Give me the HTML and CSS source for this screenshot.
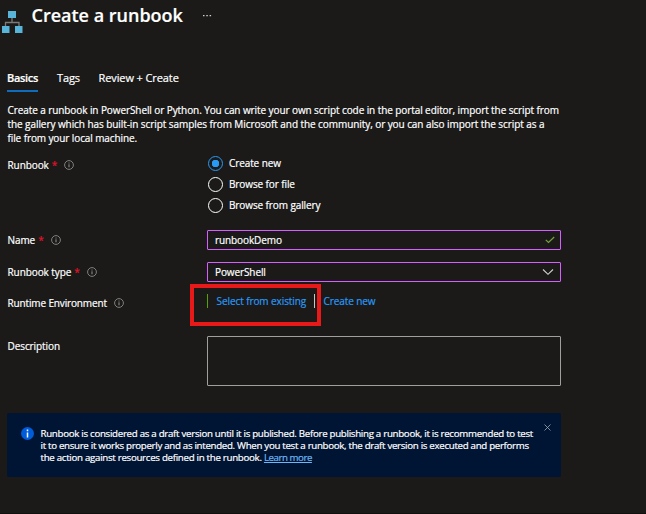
FILE: index.html
```html
<!DOCTYPE html>
<html lang="en">
<head>
<meta charset="utf-8">
<title>Create a runbook</title>
<link rel="stylesheet" href="styles.css">
</head>
<body>
<svg class="defs" width="0" height="0">
  <symbol id="info" viewBox="0 0 10 10"><circle cx="5" cy="5" r="4.4" fill="none" stroke="#8c8b8a" stroke-width=".9"/><path d="M5 4.3V7.3M5 2.6V3.5" stroke="#a5a4a3" stroke-width=".9"/></symbol>
</svg>
<header class="header">
  <svg class="logo" width="22" height="24" viewBox="0 0 22 24">
    <path d="M11 8V13M4.5 16V12.500H18V16" fill="none" stroke="#7a7a7a" stroke-width="1.300"/>
    <path d="M7 1h8v7H7zM1 16h7.500v7H1zM14 16h7.500v7H14z" fill="#59b4d9"/>
  </svg>
  <h1 class="title">Create a runbook</h1>
  <svg class="more" width="10" height="2" viewBox="0 0 10 2"><path d="M1 0h1.500v1.300H1zM4.300 0h1.500v1.300H4.300zM7.600 0h1.500v1.300H7.600z" fill="#d0d0d0"/></svg>
</header>
<nav class="tabs">
  <span class="tab active">Basics</span>
  <span class="tab tags">Tags</span>
  <span class="tab review">Review + Create</span>
</nav>
<main class="form">
  <p class="intro"><span class="i1">Create a runbook in PowerShell or Python. You can write your own script code in the portal editor, import the script from</span><br><span class="i2">the gallery which has built-in script samples from Microsoft and the community, or you can also import the script as a</span><br><span class="i3">file from your local machine.</span></p>
  <div class="row row-source">
    <div class="label"><span class="l1">Runbook</span><b class="req">*</b><svg class="info" width="10" height="10"><use href="#info"/></svg></div>
    <div class="radios">
      <div class="radio"><i class="dot on"></i><span class="r1">Create new</span></div>
      <div class="radio"><i class="dot"></i><span class="r2">Browse for file</span></div>
      <div class="radio"><i class="dot"></i><span class="r3">Browse from gallery</span></div>
    </div>
  </div>
  <div class="row row-name">
    <div class="label"><span class="l2">Name</span><b class="req">*</b><svg class="info" width="10" height="10"><use href="#info"/></svg></div>
    <div class="field"><span class="f1">runbookDemo</span><svg class="check" width="10" height="8" viewBox="0 0 10 8"><path d="M.8 3.800L3.500 6.500L9.200 1" fill="none" stroke="#74a33c" stroke-width="1.200"/></svg></div>
  </div>
  <div class="row row-type">
    <div class="label"><span class="l3">Runbook type</span><b class="req">*</b><svg class="info" width="10" height="10"><use href="#info"/></svg></div>
    <div class="field"><span class="f2">PowerShell</span><svg class="chevron" width="12" height="8" viewBox="0 0 12 8"><path d="M1 1.500L6 6.300L11 1.500" fill="none" stroke="#d0d0d0" stroke-width="1.100"/></svg></div>
  </div>
  <div class="row row-env">
    <div class="label"><span class="l4">Runtime Environment</span><svg class="info" width="10" height="10"><use href="#info"/></svg></div>
    <div class="links"><a class="link select">Select from existing</a><a class="link new">Create new</a><div class="highlight"></div></div>
  </div>
  <div class="row row-desc">
    <div class="label"><span class="l5">Description</span></div>
    <div class="area"></div>
  </div>
  <aside class="notice">
    <svg class="badge" width="13" height="13" viewBox="0 0 13 13"><circle cx="6.500" cy="6.500" r="6.500" fill="#015cda"/><path d="M6.500 5.500V10.500M6.500 2.500V4.300" stroke="#fff" stroke-width="1.500"/></svg>
    <p class="msg"><span class="n1">Runbook is considered as a draft version until it is published. Before publishing a runbook, it is recommended to test</span><br><span class="n2">it to ensure it works properly and as intended. When you test a runbook, the draft version is executed and performs</span><br><span class="n3">the action against resources defined in the runbook.</span> <a class="learn">Learn more</a></p>
    <svg class="close" width="7" height="7" viewBox="0 0 7 7"><path d="M.5 .5L6.500 6.500M6.500 .5L.5 6.500" stroke="#a0a8b5" stroke-width=".8"/></svg>
  </aside>
</main>
</body>
</html>
```
FILE: styles.css
```css
* { box-sizing: border-box; }
body {
  margin: 0;
  width: 646px;
  height: 514px;
  overflow: hidden;
  background: #1b1a19;
  border-bottom: 1px solid #11100f;
  color: #fff;
  font: 10px/14px "Open Sans", "Noto Sans", sans-serif;
  white-space: nowrap;
  -webkit-text-stroke: .2px;
}
.defs { display: none; }
svg { flex: none; display: block; }
.header { display: flex; height: 70px; padding-left: 1px; }
.logo { margin-top: 10px; }
.title { margin: 3px 0 0 8.500px; width: 150.500px; font-size: 18px; line-height: 24px; font-weight: 600; }
.more { margin: 15px 0 0 20px; }
.tabs { display: flex; height: 22px; padding-left: 7px; font-size: 11px; line-height: 16px; }
.tab { height: 22px; letter-spacing: -.1px; }
.active { width: 31px; font-weight: 600; letter-spacing: -.3px; border-bottom: 2px solid #0f6cbd; }
.tags { margin-left: 19px; width: 22px; }
.review { margin-left: 19.500px; }
.form { padding-left: 7px; width: 561px; }
.intro { margin: 10.500px 0 0; padding-left: .5px; height: 53px; }
.i1 { letter-spacing: -.085px; }
.i2 { letter-spacing: -.072px; }
.i3 { letter-spacing: -.1px; }
.row { display: flex; }
.label { display: flex; align-items: center; width: 200px; padding-left: .5px; height: 20px; letter-spacing: -.08px; }
.req { margin-left: 3px; width: 5px; color: #e3122d; font-weight: 400; }
.info { margin-left: 7.500px; }
.l4 { letter-spacing: -.14px; }
.row-source { height: 74.500px; }
.row-source .label { margin-top: -.5px; }
.radio { display: flex; align-items: center; height: 21px; padding-left: 1px; letter-spacing: -.1px; }
.radios { margin-top: -3px; }
.dot { width: 15px; height: 15px; margin-right: 6px; border: 1px solid #fff; border-radius: 50%; }
.on { border-color: #2899f5; background: radial-gradient(circle, #2899f5 3.5px, transparent 4px); }
.field { display: flex; align-items: center; justify-content: space-between; width: 354px; height: 20px; padding: 0 5px 0 7px; border: 1px solid #d55fff; border-radius: 1px; }
.f1, .f2 { letter-spacing: -.1px; }
.row-name, .row-type { height: 32px; }
.row-name .info, .row-type .info { margin-top: -1px; }
.row-type .field { padding-right: 6px; }
.row-env { height: 42px; }
.row-env .label { margin-top: -1px; }
.links { display: flex; position: relative; height: 14px; color: #2899f5; letter-spacing: -.08px; }
.select { width: 108px; padding-left: 8.500px; border-left: 1px solid #57a300; border-right: 1px solid #c8c6c4; }
.new { margin-left: 8.500px; }
.highlight { position: absolute; left: -17px; top: -10px; width: 131px; height: 42px; border: 4px solid #e81919; }
.area { width: 354px; height: 50px; border: 1px solid #a19f9d; border-radius: 1px; }
.notice { display: flex; width: 554px; height: 64px; margin-top: 27px; padding: 14px 10.500px 0 14px; background: #001433; border-radius: 2px; }
.msg { margin: 1px 0 0 6.500px; width: 496px; font-size: 9.700px; line-height: 12px; letter-spacing: -.28px; }
.n2 { letter-spacing: -.295px; }
.learn { color: #6cb8f6; text-decoration: underline; letter-spacing: -.45px; }
.close { margin: -3.500px 0 0 auto; }
```
